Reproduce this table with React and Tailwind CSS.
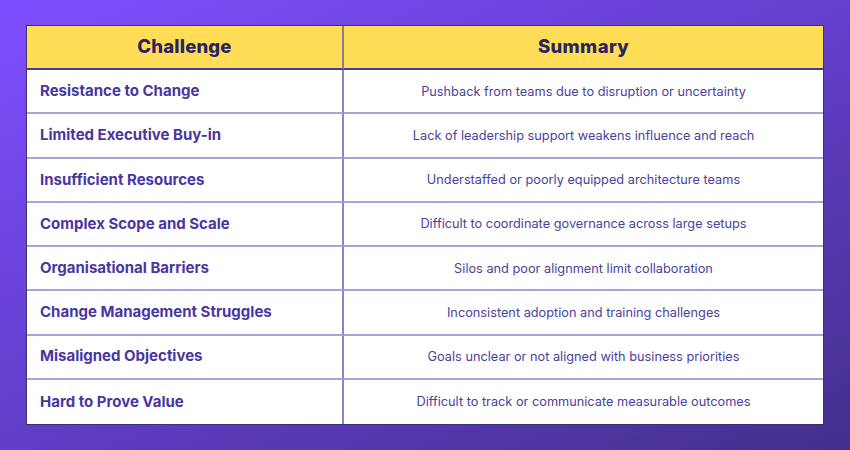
const rows = [
  ["Resistance to Change", "Pushback from teams due to disruption or uncertainty"],
  ["Limited Executive Buy-in", "Lack of leadership support weakens influence and reach"],
  ["Insufficient Resources", "Understaffed or poorly equipped architecture teams"],
  ["Complex Scope and Scale", "Difficult to coordinate governance across large setups"],
  ["Organisational Barriers", "Silos and poor alignment limit collaboration"],
  ["Change Management Struggles", "Inconsistent adoption and training challenges"],
  ["Misaligned Objectives", "Goals unclear or not aligned with business priorities"],
  ["Hard to Prove Value", "Difficult to track or communicate measurable outcomes"],
];

export default function App() {
  return (
    <div
      className="w-[850px] h-[450px] bg-[linear-gradient(155deg,#7f4eff_0%,#6540d0_45%,#442f8c_100%)] pt-[25px] pl-[26px]"
      style={{ fontFamily: "Inter, 'Noto Sans', sans-serif" }}
    >
      <div className="w-[798px] h-[400px] border border-[#3b3272] bg-white grid grid-cols-[317px_1fr] grid-rows-9">
        <div className="bg-[#ffdd57] border-r-2 border-r-[#4a3a9c]/60 border-b-2 border-b-[#4b3a9a] flex items-center justify-center text-[18.5px] font-extrabold text-[#2c2461] tracking-[0.01em]">
          Challenge
        </div>
        <div className="bg-[#ffdd57] border-b-2 border-b-[#4b3a9a] flex items-center justify-center text-[18.5px] font-extrabold text-[#2c2461] tracking-[0.02em]">
          Summary
        </div>
        {rows.map(([a, b], i) => (
          <>
            <div
              key={"a" + i}
              className={`border-r-2 border-r-[#8d84c6] flex items-center pl-[13px] text-[15px] font-bold text-[#4a36a0] ${i < rows.length - 1 ? "border-b-2 border-b-[#aaa2d8]" : ""}`}
            >
              {a}
            </div>
            <div
              key={"b" + i}
              className={`flex items-center justify-center text-[12.75px] text-[#4b3f9a] ${i < rows.length - 1 ? "border-b-2 border-b-[#aaa2d8]" : ""}`}
            >
              {b}
            </div>
          </>
        ))}
      </div>
    </div>
  );
}
